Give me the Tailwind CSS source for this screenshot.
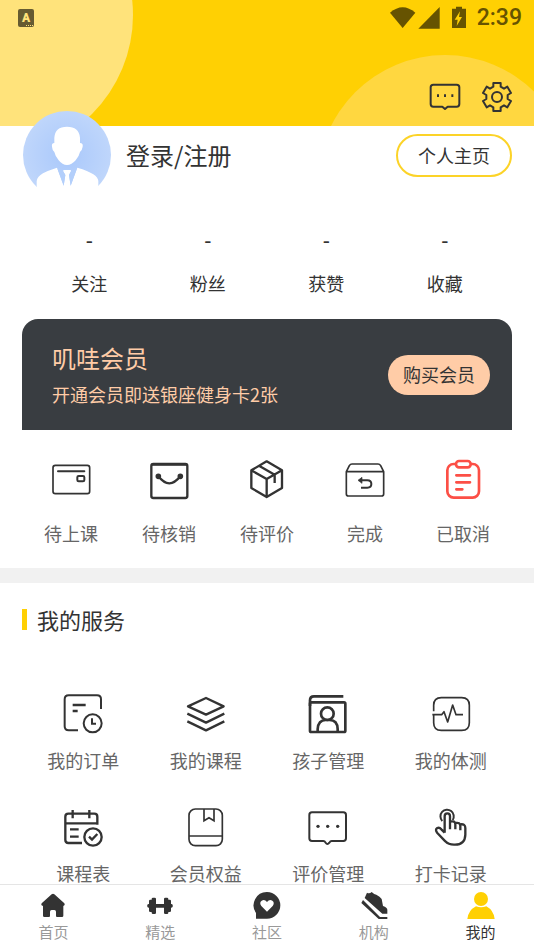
<!DOCTYPE html>
<html lang="zh-CN">
<head>
<meta charset="utf-8">
<meta name="viewport" content="width=device-width, initial-scale=1">
<title>我的</title>
<script src="https://cdn.jsdelivr.net/npm/@tailwindcss/browser@4"></script>
</head>
<body class="bg-white font-['Noto_Sans_CJK_SC',sans-serif] text-[#333]">
<div class="flex h-dvh flex-col">
  <main class="min-h-0 flex-1 overflow-y-auto [scrollbar-width:none]">

    <header class="relative flex h-[126px] flex-col justify-between overflow-hidden bg-[#ffd003]">
      <div class="absolute -left-[147px] -top-[125px] size-[280px] rounded-full bg-[#ffe37b]"></div>
      <div class="absolute -right-[38px] top-[55px] size-[254px] rounded-full bg-[#ffd740]"></div>
      <!-- status bar -->
      <div class="relative flex h-9 items-center justify-between pl-[18px] pr-3">
        <div class="relative flex h-[18px] w-4 items-center justify-center rounded-xs bg-[#665b31] font-['Roboto',sans-serif] text-xs font-black text-[#ffe37b]">A<span class="absolute bottom-px right-px w-[7px] border-b border-dotted border-[#ffe37b]"></span></div>
        <div class="flex items-center gap-2.5 text-[#665301]">
          <svg class="h-6 w-[78px]" viewBox="366 18 234 72" fill="currentColor" aria-hidden="true">
            <path d="M369 38Q407 5 445 38L407 84Z"/><path d="M518 21V86H454Z"/>
            <path d="M567 20h18v6h12v58h-42V26h12z"/><path d="M579 34l-16 25h9l-3 19 16-27h-9z" fill="#ffd003"/>
          </svg>
          <span class="font-['Roboto',sans-serif] text-[23px] font-medium leading-9">2:39</span>
        </div>
      </div>
      <div class="relative flex justify-end gap-[18px] pb-3 pr-5">
        <button type="button" aria-label="消息">
          <svg class="size-[34px]" viewBox="483 238 102 102" fill="none" stroke="#333" stroke-width="6" stroke-linejoin="round" aria-hidden="true">
            <path d="M499 252h70q8 0 8 8v50q0 8-8 8h-27l-8 7-8-7h-27q-8 0-8-8v-50q0-8 8-8z"/>
            <path d="M510 285h6M531 285h6M553 285h6" stroke-width="8"/>
          </svg>
        </button>
        <button type="button" aria-label="设置">
          <svg class="size-[34px]" viewBox="-51 -51 102 102" fill="none" stroke="#333" stroke-width="6" stroke-linejoin="round" aria-hidden="true">
            <path d="M-11-31V-42H11V-31L21-25 31-31 42-12 32-6V6L42 12 31 31 21 25 11 31V42H-11V31L-21 25-31 31-42 12-32 6V-6L-42-12-31-31-21-25Z"/>
            <circle r="15"/>
          </svg>
        </button>
      </div>
    </header>

    <section class="relative -mt-[15px] flex h-[88px] items-center pl-[23px] pr-[22px]">
      <svg class="h-[76px] w-[88px] self-start" viewBox="0 0 264 228" aria-hidden="true">
        <defs><radialGradient id="face"><stop offset="0" stop-color="#a9c8fb"/><stop offset="1" stop-color="#bfd6fb"/></radialGradient></defs>
        <circle cx="132" cy="132" r="132" fill="url(#face)"/>
        <g fill="#fff">
          <path d="M94 96V80Q96 47 132 47T171 80V96Q181 96 179 107 177 119 171 123 168 137 158 148 146 162 132 162T107 148Q97 137 94 123 88 119 87 107 85 96 94 96Z"/>
          <path d="M41 228V210Q43 197 60 187 76 178 102 170L122 224 127 192 120 180Q120 177 125 177H141Q145 177 144 181L138 192 143 224 163 170Q196 179 211 190 225 199 226 210V228Z"/>
        </g>
        <path d="M103 172L122 224 127 192 120 180 120 178Q108 177 103 172ZM162 172L143 224 138 192 144 181 145 178Q156 178 162 172Z" fill="#b3cffb"/>
      </svg>
      <a href="#" class="ml-[15px] text-2xl">登录/注册</a>
      <button type="button" class="ml-auto h-[43px] w-[116px] rounded-full border-2 border-[#fcd328] bg-white text-lg leading-7">个人主页</button>
    </section>

    <section class="mt-[27px] grid grid-cols-4 px-[30px] text-center text-lg leading-7">
      <a href="#"><div class="text-xl font-medium leading-7">-</div><div class="mt-[15px]">关注</div></a>
      <a href="#"><div class="text-xl font-medium leading-7">-</div><div class="mt-[15px]">粉丝</div></a>
      <a href="#"><div class="text-xl font-medium leading-7">-</div><div class="mt-[15px]">获赞</div></a>
      <a href="#"><div class="text-xl font-medium leading-7">-</div><div class="mt-[15px]">收藏</div></a>
    </section>

    <section class="mx-[22px] mt-[22px] flex h-[111px] items-center justify-between rounded-t-2xl bg-[#393d41] pl-[30px] pr-[22px] text-[#ffcca7]">
      <div class="pt-[3px]">
        <h2 class="text-2xl leading-9">叽哇会员</h2>
        <p class="text-lg leading-9">开通会员即送银座健身卡2张</p>
      </div>
      <button type="button" class="h-10 w-[102px] rounded-full bg-[#ffcca7] pb-0.5 text-lg leading-7 text-[#333]">购买会员</button>
    </section>

    <section class="grid grid-cols-5 px-[22px] pb-[21px] pt-7 text-lg leading-7 text-[#666]">
      <a href="#" class="flex flex-col items-center gap-[17px]">
        <svg class="size-11" viewBox="57 39 132 132" fill="none" stroke="#333" stroke-width="5" stroke-linecap="round" aria-hidden="true"><rect x="69" y="61" width="110" height="85" rx="7"/><path d="M84 79h79" stroke-width="6"/><rect x="142" y="93" width="21" height="16" rx="4" stroke-width="6"/></svg>
        待上课</a>
      <a href="#" class="flex flex-col items-center gap-[17px]">
        <svg class="size-11" viewBox="351 39 132 132" fill="none" stroke="#333" stroke-width="7" stroke-linecap="round" aria-hidden="true"><rect x="364" y="57" width="108" height="102" rx="6"/><path d="M367 59h102"/><path d="M385 94Q418 136 451 94"/><circle cx="385" cy="94" r="5" fill="#333"/><circle cx="451" cy="94" r="5" fill="#333"/></svg>
        待核销</a>
      <a href="#" class="flex flex-col items-center gap-[17px]">
        <svg class="size-11" viewBox="-45 39 132 132" fill="none" stroke="#333" stroke-width="7" stroke-linejoin="round" aria-hidden="true"><path d="M20 49L66 76V129L20 156-26 129V76ZM-26 76L20 102 66 76M20 102V156M-3 62L44 89V114"/></svg>
        待评价</a>
      <a href="#" class="flex flex-col items-center gap-[17px]">
        <svg class="size-11" viewBox="249 39 132 132" fill="none" stroke="#333" stroke-width="5" stroke-linejoin="round" aria-hidden="true"><path d="M259 80L268 62Q271 57 276 57H354Q359 57 362 62L371 80V147Q371 153 365 153H265Q259 153 259 147ZM259 80H371"/><path d="M303 106H322Q334 106 334 117T322 128H303" stroke-width="6"/><path d="M294 106L306 97V115Z" fill="#333" stroke-width="2"/></svg>
        完成</a>
      <a href="#" class="flex flex-col items-center gap-[17px]">
        <svg class="size-11" viewBox="543 39 132 132" fill="none" stroke="#fc4f46" stroke-width="8" stroke-linecap="round" aria-hidden="true"><rect x="562" y="57" width="95" height="101" rx="19"/><rect x="588" y="48" width="44" height="19" rx="9" fill="#fff"/><path d="M589 91h41M589 112h41M589 133h18"/></svg>
        已取消</a>
    </section>

    <div class="h-[15px] bg-[#f1f1f1]"></div>

    <section class="px-[22px] pb-6 pt-[22px]">
      <h2 class="flex items-center gap-2.5 text-[22px] leading-7"><span class="h-[21px] w-[5px] bg-[#ffd003]"></span>我的服务</h2>
      <div class="mt-[59px] grid grid-cols-4 gap-y-[31px] text-lg leading-7 text-[#666]">
        <a href="#" class="flex flex-col items-center gap-2.5">
          <svg class="size-11" viewBox="64 36 132 132" fill="none" stroke="#333" stroke-width="6" aria-hidden="true"><path d="M184 87V58Q184 46 172 46H87Q75 46 75 58V139Q75 151 87 151H115"/><path d="M99 75H138M99 93H114" stroke-width="7"/><circle cx="159" cy="130" r="27"/><path d="M157 115V131H169"/></svg>
          我的订单</a>
        <a href="#" class="flex flex-col items-center gap-2.5">
          <svg class="size-11" viewBox="431 36 132 132" fill="none" stroke="#333" stroke-width="7" stroke-linejoin="round" aria-hidden="true"><path d="M497 54L550 79 497 104 443 79ZM441 101L497 128 552 101M441 124L497 151 552 124"/></svg>
          我的课程</a>
        <a href="#" class="flex flex-col items-center gap-2.5">
          <svg class="size-11" viewBox="109 36 132 132" fill="none" stroke="#333" stroke-width="8" stroke-linejoin="round" aria-hidden="true"><rect x="121" y="67" width="106" height="89" rx="4"/><path d="M121 78V61Q121 49 133 49H221M144 156V147Q146 120 168 120H180Q203 120 204 147V156"/><circle cx="173" cy="101" r="19"/></svg>
          孩子管理</a>
        <a href="#" class="flex flex-col items-center gap-2.5">
          <svg class="size-11" viewBox="476 36 132 132" fill="none" stroke="#333" stroke-width="5" stroke-linejoin="round" aria-hidden="true"><path d="M490 94V76Q490 53 513 53H574Q597 53 597 76V128Q597 151 574 151H513Q490 151 490 128V104M486 104H514L521 95 532 126 547 75 557 104H578"/></svg>
          我的体测</a>
        <a href="#" class="flex flex-col items-center gap-2.5">
          <svg class="size-11" viewBox="64 45 132 132" fill="none" stroke="#333" stroke-width="7" aria-hidden="true"><path d="M173 104V80Q173 71 164 71H86Q77 71 77 80V150Q77 159 86 159H127M77 100H173M99 60V85M149 60V85M91 118H117M91 140H117"/><circle cx="160" cy="141" r="26"/><path d="M148 140L157 149 173 132"/></svg>
          课程表</a>
        <a href="#" class="flex flex-col items-center gap-2.5">
          <svg class="size-11" viewBox="431 45 132 132" fill="none" stroke="#333" stroke-width="5" aria-hidden="true"><rect x="446" y="57" width="100" height="110" rx="19"/><path d="M446 138H546M491 57V92L506 83 521 92V57"/></svg>
          会员权益</a>
        <a href="#" class="flex flex-col items-center gap-2.5">
          <svg class="size-11" viewBox="109 45 132 132" fill="none" stroke="#333" stroke-width="6" stroke-linejoin="round" aria-hidden="true"><path d="M127 67H221Q229 67 229 75V145Q229 153 221 153H186Q182 153 179 158 173 166 168 158 165 153 161 153H127Q119 153 119 145V75Q119 67 127 67Z"/><g fill="#333" stroke="none"><circle cx="145" cy="109" r="5"/><circle cx="174" cy="109" r="5"/><circle cx="204" cy="109" r="5"/></g></svg>
          评价管理</a>
        <a href="#" class="flex flex-col items-center gap-2.5">
          <svg class="size-11" viewBox="476 45 132 132" fill="none" stroke="#333" stroke-width="7" stroke-linejoin="round" aria-hidden="true"><path d="M523 128V79Q523 70 531 70T539 79V118M539 95Q555 91 555 103V118M555 99Q570 96 570 108V121M570 103Q585 101 585 114V134Q584 164 554 164 535 165 525 154L501 129Q493 119 501 114 507 111 513 118L523 128"/><path d="M516 93A20 20 0 1 1 547 90" stroke-width="6"/></svg>
          打卡记录</a>
      </div>
    </section>
  </main>

  <nav class="grid h-[66px] shrink-0 grid-cols-5 border-t border-[#e5e5e5] bg-white pt-[7px] text-[15px] leading-6 text-[#999]">
    <a href="#" class="flex flex-col items-center">
      <svg class="size-7" viewBox="118 36 84 84" fill="#333" aria-hidden="true"><path d="M156 43Q160 39 164 43L194 70Q197 74 193 77H191V107Q191 111 187 111H172Q169 111 169 108V95Q169 90 164 90H156Q151 90 151 95V108Q151 111 148 111H134Q130 111 130 107V77H127Q123 74 126 70Z"/></svg>
      首页</a>
    <a href="#" class="flex flex-col items-center">
      <svg class="size-7" viewBox="439 36 84 84" fill="#333" aria-hidden="true"><rect x="456" y="53" width="13" height="49" rx="4"/><rect x="493" y="53" width="13" height="49" rx="4"/><rect x="448" y="59" width="12" height="37" rx="4"/><rect x="502" y="59" width="12" height="37" rx="4"/><rect x="443" y="72" width="76" height="11" rx="4"/></svg>
      精选</a>
    <a href="#" class="flex flex-col items-center">
      <svg class="size-7" viewBox="759 36 84 84" fill="#333" aria-hidden="true"><path d="M801 36A40 40 0 1 1 801 116H768V99A40 40 0 0 1 801 36Z"/><path d="M801 95L784 78Q777 68 785 62 794 57 801 66 808 57 817 62 825 68 818 78Z" fill="#fff"/></svg>
      社区</a>
    <a href="#" class="flex flex-col items-center">
      <svg class="size-7" viewBox="278 36 84 84" fill="#333" aria-hidden="true"><path d="M299 38Q306 43 313 36 321 44 327 44 338 49 343 57L347 78Q360 83 360 89V101H345L292 54Z"/><path d="M287 60L282 69 334 117H360V111H338Z"/></svg>
      机构</a>
    <a href="#" aria-current="page" class="flex flex-col items-center text-[#333]">
      <svg class="size-7" viewBox="598 36 84 84" fill="#ffd003" aria-hidden="true"><circle cx="640" cy="57" r="21"/><path d="M599 117Q602 91 625 79 640 85 656 79 678 91 681 117Z"/></svg>
      我的</a>
  </nav>
</div>
</body>
</html>
